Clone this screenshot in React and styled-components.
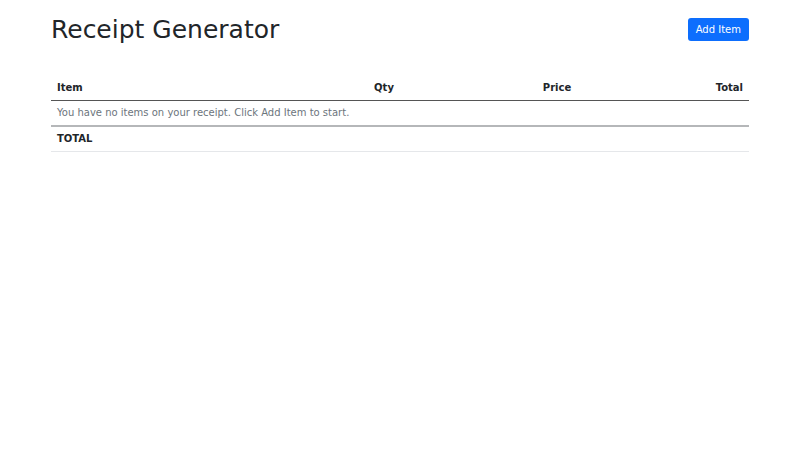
import React from 'react';
import styled, { createGlobalStyle } from 'styled-components';

const GlobalStyle = createGlobalStyle`
  body {
    margin: 0;
    background: #fff;
    color: #212529;
    font-family: "DejaVu Sans", sans-serif;
  }
`;

const Container = styled.div`
  width: 698px;
  margin: 0 auto;
  padding-top: 14px;
`;

const Header = styled.div`
  display: flex;
  justify-content: space-between;
  align-items: flex-start;
  margin-bottom: 32px;
`;

const Title = styled.h1`
  margin: 2px 0 0;
  font-size: 25px;
  font-weight: 400;
  line-height: 28px;
`;

const AddButton = styled.button`
  margin-top: 4px;
  height: 23px;
  padding: 0 8px;
  border: none;
  border-radius: 3px;
  background: #0d6efd;
  color: #fff;
  font-family: inherit;
  font-size: 10px;
  cursor: pointer;
`;

const Table = styled.table`
  width: 100%;
  border-collapse: collapse;
  font-size: 10px;
  table-layout: fixed;
`;

const Cell = styled.td`
  padding: 3px 6px;
  height: 18px;
  line-height: 18px;
  text-align: ${(p) => p.$align || 'left'};
  font-weight: ${(p) => (p.$bold ? 700 : 400)};
  color: ${(p) => (p.$muted ? '#6c757d' : '#212529')};
`;

const HeadRow = styled.tr`
  border-bottom: 1px solid #555;
`;

const Row = styled.tr`
  border-bottom: ${(p) => p.$border};
`;

const columns = [
  { label: 'Item', align: 'left', width: 250 },
  { label: 'Qty', align: 'center', width: 166 },
  { label: 'Price', align: 'center', width: 180 },
  { label: 'Total', align: 'right', width: 102 },
];

export default function App() {
  return (
    <>
      <GlobalStyle />
      <Container>
        <Header>
          <Title>Receipt Generator</Title>
          <AddButton>Add Item</AddButton>
        </Header>
        <Table>
          <colgroup>
            {columns.map((c) => (
              <col key={c.label} style={{ width: c.width }} />
            ))}
          </colgroup>
          <thead>
            <HeadRow>
              {columns.map((c) => (
                <Cell as="th" key={c.label} $align={c.align} $bold>
                  {c.label}
                </Cell>
              ))}
            </HeadRow>
          </thead>
          <tbody>
            <Row $border="2px solid #b5b7b9">
              <Cell colSpan={4} $muted>
                You have no items on your receipt. Click Add Item to start.
              </Cell>
            </Row>
          </tbody>
          <tfoot>
            <Row $border="1px solid #e5e7ea">
              <Cell $bold>TOTAL</Cell>
              <Cell />
              <Cell />
              <Cell />
            </Row>
          </tfoot>
        </Table>
      </Container>
    </>
  );
}
